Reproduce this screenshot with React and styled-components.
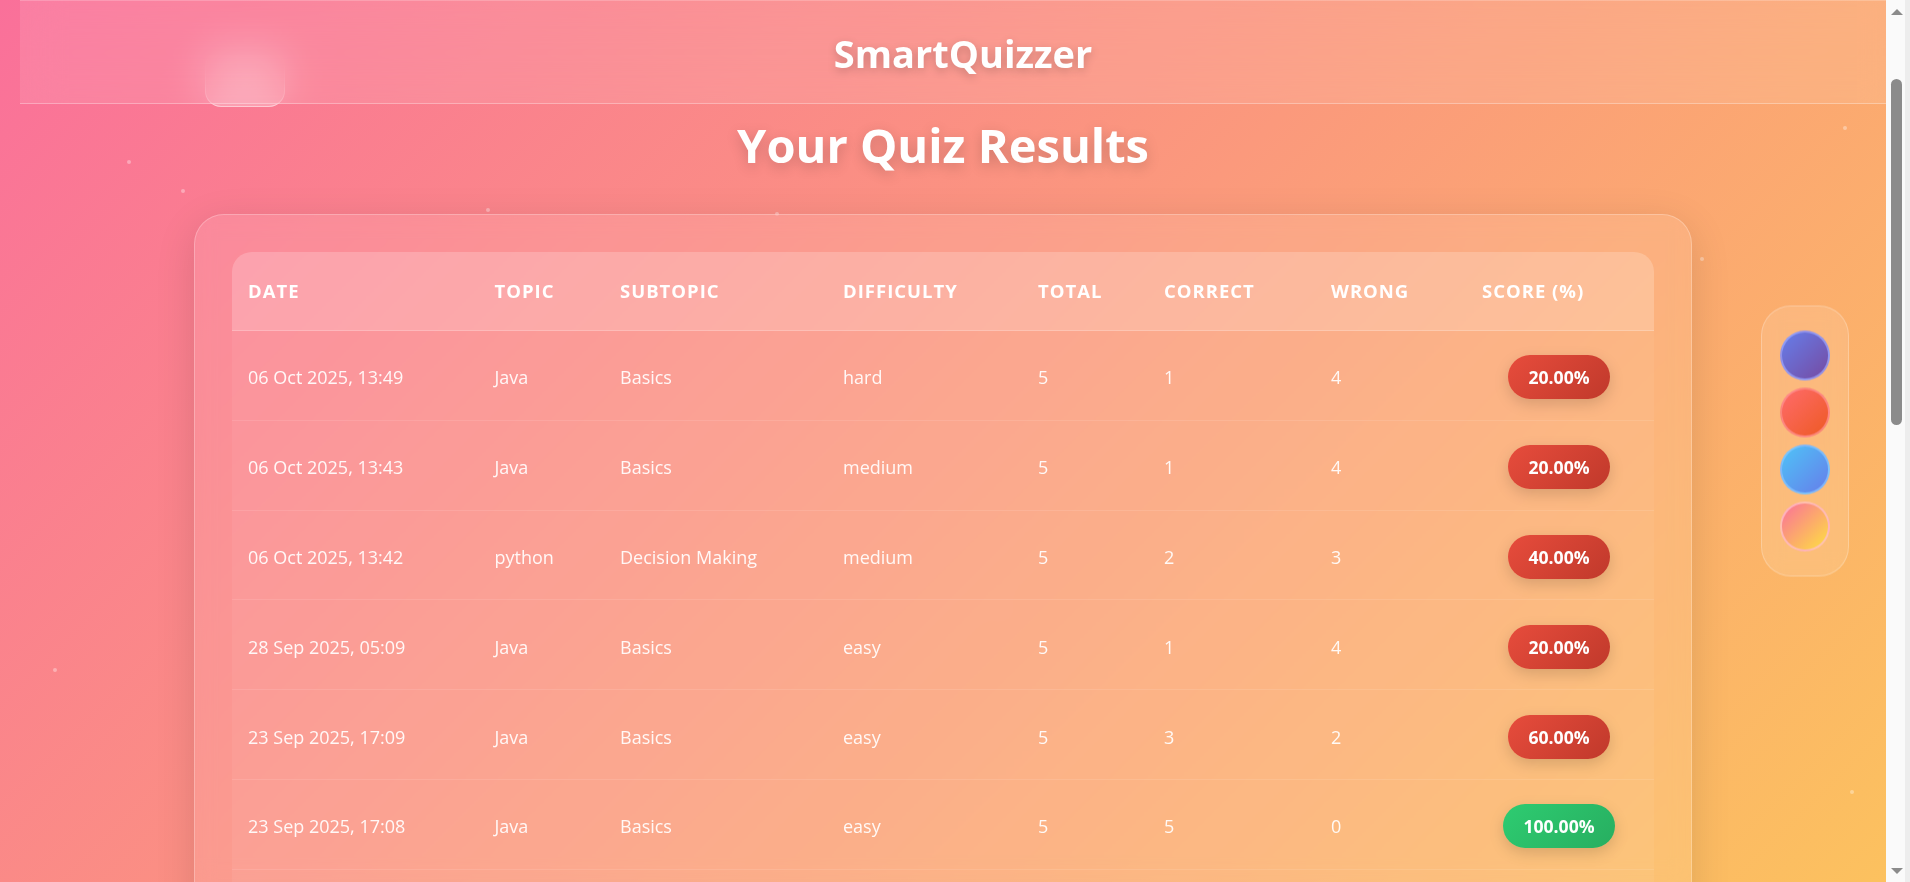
import React from 'react';
import styled, { createGlobalStyle } from 'styled-components';

const GlobalStyle = createGlobalStyle`
  * { box-sizing: border-box; }
  html { scrollbar-width: none; }
  html::-webkit-scrollbar { display: none; }
  body {
    margin: 0;
    font-family: "Open Sans", "Liberation Sans", sans-serif;
    color: #fff;
    background: linear-gradient(135deg, #fa709a 0%, #fcc25e 100%);
    background-attachment: fixed;
    min-height: 100vh;
    overflow-x: hidden;
  }
`;

const Page = styled.div`
  position: relative;
  min-height: 100vh;
  margin-right: 24px;
  padding-bottom: 40px;
`;

const Particles = styled.div`
  position: fixed;
  inset: 0;
  pointer-events: none;
  z-index: 0;
`;

const Dot = styled.span`
  position: absolute;
  width: 4px;
  height: 4px;
  border-radius: 50%;
  background: rgba(255, 255, 255, 0.35);
`;

const GhostButton = styled.div`
  position: absolute;
  left: 205px;
  top: 50px;
  width: 80px;
  height: 57px;
  border-radius: 16px;
  background: rgba(255, 255, 255, 0.28);
  border: 1px solid rgba(255, 255, 255, 0.45);
  z-index: 0;
`;

const Header = styled.header`
  position: relative;
  z-index: 2;
  margin-left: 20px;
  width: 100%;
  height: 104px;
  display: flex;
  align-items: center;
  justify-content: center;
  background: rgba(255, 255, 255, 0.1);
  backdrop-filter: blur(20px);
  border-top: 1px solid rgba(255, 255, 255, 0.2);
  border-bottom: 1px solid rgba(255, 255, 255, 0.3);
`;

const Brand = styled.div`
  font-size: 38px;
  font-weight: 700;
  text-shadow: 0 3px 10px rgba(0, 0, 0, 0.2);
  margin-top: 2px;
`;

const Main = styled.main`
  position: relative;
  z-index: 1;
`;

const Title = styled.h1`
  margin: 12px 0 40px;
  text-align: center;
  font-size: 47px;
  line-height: 58px;
  font-weight: 700;
  text-shadow: 0 4px 14px rgba(0, 0, 0, 0.18);
`;

const Card = styled.section`
  max-width: 1498px;
  margin: 0 auto;
  padding: 37px;
  border-radius: 30px;
  background: rgba(255, 255, 255, 0.1);
  border: 1px solid rgba(255, 255, 255, 0.25);
  box-shadow: 0 10px 40px rgba(0, 0, 0, 0.12);
  backdrop-filter: blur(10px);
`;

const Table = styled.table`
  width: 100%;
  table-layout: fixed;
  border-collapse: separate;
  border-spacing: 0;
  border-radius: 20px;
  overflow: hidden;
`;

const Th = styled.th`
  text-align: left;
  padding: 27px 18px 27px 16px;
  font-size: 18.5px;
  line-height: 24px;
  font-weight: 700;
  letter-spacing: 1px;
  text-transform: uppercase;
  background: rgba(255, 255, 255, 0.2);
  border-bottom: 1px solid rgba(255, 255, 255, 0.2);
  white-space: nowrap;
`;

const Row = styled.tr`
  background: rgba(255, 255, 255, 0.05);
`;

const Td = styled.td`
  padding: 24.4px 18px 20.4px 16px;
  font-size: 18px;
  line-height: 24px;
  color: rgba(255, 255, 255, 0.92);
  text-align: ${p => (p.center ? 'center' : 'left')};
  vertical-align: middle;
  border-bottom: 1px solid rgba(255, 255, 255, 0.1);
  white-space: nowrap;
`;

const Badge = styled.span`
  display: inline-block;
  padding: 10px 20px;
  line-height: 24px;
  font-size: 17.6px;
  font-weight: 700;
  color: #fff;
  border-radius: 25px;
  background: ${p =>
    p.good
      ? 'linear-gradient(135deg, #2ecc71, #27ae60)'
      : 'linear-gradient(135deg, #e74c3c, #c0392b)'};
  box-shadow: 0 5px 15px rgba(0, 0, 0, 0.15);
`;

const ThemePanel = styled.aside`
  position: fixed;
  right: 61px;
  top: 50%;
  transform: translateY(-50%);
  z-index: 5;
  display: flex;
  flex-direction: column;
  gap: 7px;
  padding: 24px 18px;
  border-radius: 30px;
  background: rgba(255, 255, 255, 0.12);
  border: 1px solid rgba(255, 255, 255, 0.25);
  backdrop-filter: blur(10px);
`;

const Swatch = styled.button`
  width: 50px;
  height: 50px;
  border-radius: 50%;
  padding: 0;
  cursor: pointer;
  background: ${p => p.bg};
  border: 2px solid ${p => p.ring};
`;

/* window scrollbar as it shows in the capture */
const ScrollTrack = styled.div`
  position: fixed;
  top: 0;
  right: 0;
  bottom: 0;
  width: 24px;
  z-index: 10;
  background: #fafafa;
  border-right: 5px solid #ededed;
`;

const ScrollThumb = styled.div`
  position: absolute;
  left: 5px;
  top: 79px;
  width: 11px;
  height: 346px;
  border-radius: 6px;
  background: #8b8b8b;
`;

const Arrow = styled.div`
  position: absolute;
  left: 5px;
  width: 0;
  height: 0;
  border-left: 6px solid transparent;
  border-right: 6px solid transparent;
  ${p =>
    p.down
      ? 'bottom: 8px; border-top: 6px solid #8b8b8b;'
      : 'top: 9px; border-bottom: 6px solid #8b8b8b;'}
`;

const columns = [
  { label: 'Date', width: 246.5 },
  { label: 'Topic', width: 125.5 },
  { label: 'Subtopic', width: 223 },
  { label: 'Difficulty', width: 195 },
  { label: 'Total', width: 126 },
  { label: 'Correct', width: 167 },
  { label: 'Wrong', width: 151 },
  { label: 'Score (%)' },
];

const results = [
  ['06 Oct 2025, 13:49', 'Java', 'Basics', 'hard', 5, 1],
  ['06 Oct 2025, 13:43', 'Java', 'Basics', 'medium', 5, 1],
  ['06 Oct 2025, 13:42', 'python', 'Decision Making', 'medium', 5, 2],
  ['28 Sep 2025, 05:09', 'Java', 'Basics', 'easy', 5, 1],
  ['23 Sep 2025, 17:09', 'Java', 'Basics', 'easy', 5, 3],
  ['23 Sep 2025, 17:08', 'Java', 'Basics', 'easy', 5, 5],
  ['23 Sep 2025, 16:51', 'Java', 'Loops', 'easy', 5, 4],
  ['22 Sep 2025, 21:14', 'python', 'Basics', 'easy', 5, 3],
  ['22 Sep 2025, 21:02', 'python', 'Loops', 'medium', 5, 2],
  ['21 Sep 2025, 18:40', 'Java', 'OOP', 'medium', 5, 2],
  ['21 Sep 2025, 18:32', 'Java', 'OOP', 'easy', 5, 4],
  ['20 Sep 2025, 11:25', 'C', 'Pointers', 'hard', 5, 1],
  ['20 Sep 2025, 11:10', 'C', 'Arrays', 'medium', 5, 3],
  ['19 Sep 2025, 09:47', 'python', 'Functions', 'easy', 5, 5],
  ['19 Sep 2025, 09:35', 'python', 'Functions', 'medium', 5, 3],
  ['18 Sep 2025, 20:18', 'Java', 'Strings', 'easy', 5, 4],
  ['18 Sep 2025, 20:05', 'Java', 'Arrays', 'hard', 5, 2],
  ['17 Sep 2025, 15:56', 'SQL', 'Joins', 'medium', 5, 3],
  ['17 Sep 2025, 15:41', 'SQL', 'Basics', 'easy', 5, 4],
];

const themes = [
  { bg: 'linear-gradient(135deg, #667eea, #764ba2)', ring: 'rgba(160, 170, 255, 0.7)' },
  { bg: 'linear-gradient(135deg, #ff6b6b, #ee5a24)', ring: 'rgba(255, 150, 150, 0.7)' },
  { bg: 'linear-gradient(135deg, #4fc3f7, #667eea)', ring: 'rgba(140, 200, 255, 0.7)' },
  { bg: 'linear-gradient(135deg, #fa709a, #fee140)', ring: 'rgba(255, 190, 200, 0.8)' },
];

const dots = [
  [127, 160], [181, 189], [53, 668], [1843, 126], [1700, 257],
  [486, 208], [775, 212], [999, 607], [1850, 790], [1472, 238],
];

export default function App() {
  return (
    <>
      <GlobalStyle />
      <Page>
        <Particles>
          {dots.map(([x, y], i) => (
            <Dot key={i} style={{ left: x, top: y }} />
          ))}
        </Particles>
        <GhostButton />
        <Header>
          <Brand>SmartQuizzer</Brand>
        </Header>
        <Main>
          <Title>Your Quiz Results</Title>
          <Card>
            <Table>
              <colgroup>
                {columns.map(c => (
                  <col key={c.label} style={c.width ? { width: c.width } : undefined} />
                ))}
              </colgroup>
              <thead>
                <tr>
                  {columns.map(c => (
                    <Th key={c.label}>{c.label}</Th>
                  ))}
                </tr>
              </thead>
              <tbody>
                {results.map(([date, topic, sub, diff, total, correct], i) => {
                  const score = (correct / total) * 100;
                  return (
                    <Row key={i}>
                      <Td>{date}</Td>
                      <Td>{topic}</Td>
                      <Td>{sub}</Td>
                      <Td>{diff}</Td>
                      <Td>{total}</Td>
                      <Td>{correct}</Td>
                      <Td>{total - correct}</Td>
                      <Td center>
                        <Badge good={score >= 70}>{score.toFixed(2)}%</Badge>
                      </Td>
                    </Row>
                  );
                })}
              </tbody>
            </Table>
          </Card>
        </Main>
        <ThemePanel>
          {themes.map((t, i) => (
            <Swatch key={i} bg={t.bg} ring={t.ring} aria-label={`theme ${i + 1}`} />
          ))}
        </ThemePanel>
      </Page>
      <ScrollTrack>
        <Arrow />
        <ScrollThumb />
        <Arrow down />
      </ScrollTrack>
    </>
  );
}
